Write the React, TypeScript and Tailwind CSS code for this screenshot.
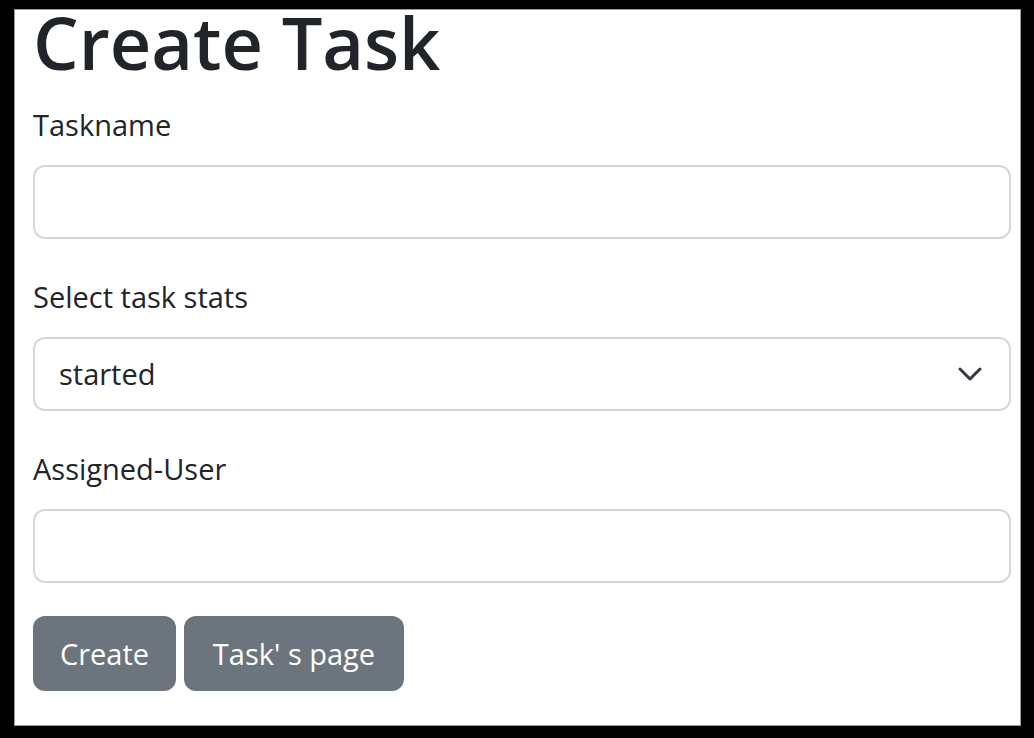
import { useState } from "react";

export default function App() {
  const [taskname, setTaskname] = useState("");
  const [status, setStatus] = useState("started");
  const [user, setUser] = useState("");

  return (
    <div className="w-[1034px] h-[738px] bg-black pl-[14px] pt-[9px] pr-[13px] pb-[12px] font-['Open_Sans',sans-serif] text-[#212529]">
      <div className="flex flex-col h-full bg-white pl-[19px] pr-[10px] shadow-[inset_0_0_0_1px_#9a9a9a]">
        <h1 className="text-[72px] leading-[80px] font-semibold -mt-[7px] mb-[22px]">Create Task</h1>

        <form onSubmit={(e) => e.preventDefault()}>
          {/* taskname */}
          <div className="mb-[37px]">
            <label className="block text-[29px] leading-[42px] mb-[19px]">Taskname</label>
            <input
              type="text"
              value={taskname}
              onChange={(e) => setTaskname(e.target.value)}
              className="block w-full h-[74px] px-[26px] text-[29px] border-2 border-[#d4d8dd] rounded-[12px] outline-none"
            />
          </div>

          {/* status */}
          <div className="mb-[37px]">
            <label className="block text-[29px] leading-[42px] mb-[19px]">Select task stats</label>
            <div className="relative">
              <select
                value={status}
                onChange={(e) => setStatus(e.target.value)}
                className="block w-full h-[74px] pl-[24px] pr-[70px] text-[29px] border-2 border-[#d4d8dd] rounded-[12px] bg-white appearance-none outline-none"
              >
                <option value="started">started</option>
                <option value="in progress">in progress</option>
                <option value="done">done</option>
              </select>
              <svg
                className="absolute right-[29px] top-[30px] pointer-events-none"
                width="24"
                height="14"
                viewBox="0 0 24 14"
                fill="none"
                stroke="#343a40"
                strokeWidth="3"
                strokeLinecap="round"
                strokeLinejoin="round"
              >
                <path d="M2 2l10 10 10-10" />
              </svg>
            </div>
          </div>

          {/* assigned user */}
          <div className="mb-[33px]">
            <label className="block text-[29px] leading-[42px] mb-[19px]">Assigned-User</label>
            <input
              type="text"
              value={user}
              onChange={(e) => setUser(e.target.value)}
              className="block w-full h-[74px] px-[26px] text-[29px] border-2 border-[#d4d8dd] rounded-[12px] outline-none"
            />
          </div>

          <div className="flex gap-[8px]">
            <button
              type="submit"
              className="w-[143px] h-[75px] flex items-center justify-center bg-[#6c757d] text-white text-[29px] rounded-[12px]"
            >
              Create
            </button>
            <button
              type="button"
              className="w-[220px] h-[75px] flex items-center justify-center bg-[#6c757d] text-white text-[29px] rounded-[12px]"
            >
              Task' s page
            </button>
          </div>
        </form>
      </div>
    </div>
  );
}
